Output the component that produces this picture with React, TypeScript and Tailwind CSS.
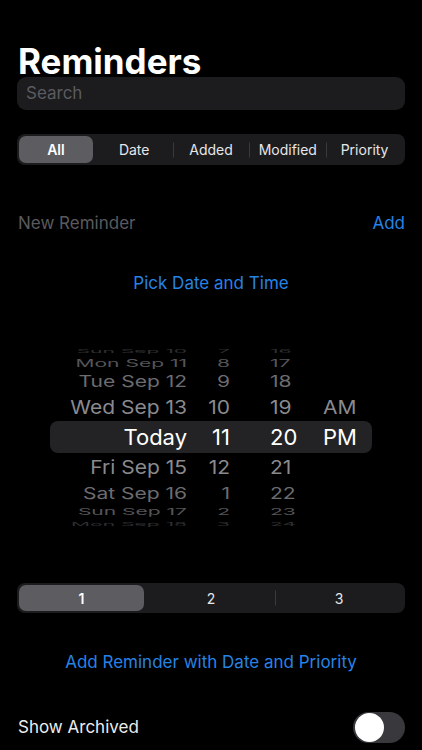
import { useState } from 'react';

type WheelRow = {
    date: string;
    hour: string;
    minute: string;
    ampm?: string;
    h: string;
    scale: string;
    color: string;
};

// wheel rows top to bottom; heights and squash fake the cylinder
const rows: WheelRow[] = [
    { date: 'Sun Sep 10', hour: '7', minute: '16', h: 'h-[9px]', scale: 'scale-y-[0.25]', color: 'text-[#2e2e30]' },
    { date: 'Mon Sep 11', hour: '8', minute: '17', h: 'h-[14px]', scale: 'scale-y-[0.5]', color: 'text-[#555558]' },
    { date: 'Tue Sep 12', hour: '9', minute: '18', h: 'h-[23px]', scale: 'scale-y-[0.75]', color: 'text-[#6c6c70]' },
    { date: 'Wed Sep 13', hour: '10', minute: '19', ampm: 'AM', h: 'h-[28px]', scale: 'scale-y-[0.9]', color: 'text-[#8a8a8e]' },
];

const rowsBelow: WheelRow[] = [
    { date: 'Fri Sep 15', hour: '12', minute: '21', h: 'h-[29px]', scale: 'scale-y-[0.9]', color: 'text-[#8a8a8e]' },
    { date: 'Sat Sep 16', hour: '1', minute: '22', h: 'h-[22px]', scale: 'scale-y-[0.75]', color: 'text-[#6c6c70]' },
    { date: 'Sun Sep 17', hour: '2', minute: '23', h: 'h-[15px]', scale: 'scale-y-[0.45]', color: 'text-[#555558]' },
    { date: 'Mon Sep 18', hour: '3', minute: '24', h: 'h-[10px]', scale: 'scale-y-[0.25]', color: 'text-[#2e2e30]' },
];

const Row = ({ r }: { r: WheelRow }) => (
    <div className={`${r.h} mx-[50px] flex items-center overflow-visible`}>
        <div className={`flex w-full items-center text-[21px] leading-none ${r.scale} ${r.color}`}>
            <span className="w-[137px] text-right">{r.date}</span>
            <span className="w-[43px] text-right">{r.hour}</span>
            <span className="ml-[40px] w-[53px]">{r.minute}</span>
            <span className="flex-1">{r.ampm}</span>
        </div>
    </div>
);

const Segmented = ({ items, selected, dividers }: { items: string[]; selected: number; dividers: number[] }) => (
    <div className="flex h-full w-full rounded-[8px] bg-[#1c1c1e] p-[2px]">
        {items.map((item, i) => (
            <div key={item} className="relative flex flex-1 items-center justify-center">
                {dividers.includes(i) && (
                    <div className="absolute left-0 top-1/2 h-[15px] w-px -translate-y-1/2 bg-[#3a3a3c]" />
                )}
                <div
                    className={`flex h-full w-full items-center justify-center rounded-[7px] text-[14px] ${
                        i === selected ? 'mr-[3px] bg-[#5d5d61] font-semibold text-white' : 'text-[#e6e6e8]'
                    }`}
                >
                    {item}
                </div>
            </div>
        ))}
    </div>
);

export default function App() {
    const [archived, setArchived] = useState(false);

    return (
        <div className="h-[750px] w-[422px] overflow-hidden bg-black px-[17px] font-['Inter',sans-serif] text-white">
            <h1 className="mt-[44px] h-[33px] pl-px text-[35px] font-bold leading-[34px]">Reminders</h1>

            <div className="flex h-[33px] items-center rounded-[9px] bg-[#1c1c1e] pl-[9px] text-[17px] text-[#5b5b5f]">
                Search
            </div>

            <div className="mt-[24px] h-[31px]">
                <Segmented items={['All', 'Date', 'Added', 'Modified', 'Priority']} selected={0} dividers={[2, 3, 4]} />
            </div>

            <div className="mt-[48px] flex h-[22px] items-center justify-between pl-px text-[17px]">
                <span className="text-[#5a5a5e]">New Reminder</span>
                <span className="text-[#2683e6]">Add</span>
            </div>

            <div className="mt-[38px] flex h-[22px] items-center justify-center text-[17px] text-[#2683e6]">
                Pick Date and Time
            </div>

            {/* date & time wheel */}
            <div className="-mx-[17px] mt-[52px] flex flex-col">
                {rows.map((r) => (
                    <Row key={r.date} r={r} />
                ))}
                <div className="mx-[50px] flex h-[32px] items-center rounded-[8px] bg-[#232325] text-[22px] leading-none text-white">
                    <span className="w-[137px] text-right">Today</span>
                    <span className="w-[43px] text-right">11</span>
                    <span className="ml-[40px] w-[53px]">20</span>
                    <span className="flex-1">PM</span>
                </div>
                {rowsBelow.map((r) => (
                    <Row key={r.date} r={r} />
                ))}
            </div>

            <div className="mt-[54px] h-[30px]">
                <Segmented items={['1', '2', '3']} selected={0} dividers={[2]} />
            </div>

            <div className="mt-[39px] flex h-[22px] items-center justify-center text-[17px] text-[#2683e6]">
                Add Reminder with Date and Priority
            </div>

            <div className="mt-[38px] flex h-[31px] items-center justify-between pl-px">
                <span className="text-[17px] text-[#ececee]">Show Archived</span>
                <button
                    onClick={() => setArchived(!archived)}
                    className={`flex h-[31px] w-[52px] items-center rounded-full p-[2px] ${
                        archived ? 'justify-end bg-[#30d158]' : 'justify-start bg-[#39393d]'
                    }`}
                >
                    <span className="h-[29px] w-[29px] rounded-full bg-white" />
                </button>
            </div>
        </div>
    );
}
